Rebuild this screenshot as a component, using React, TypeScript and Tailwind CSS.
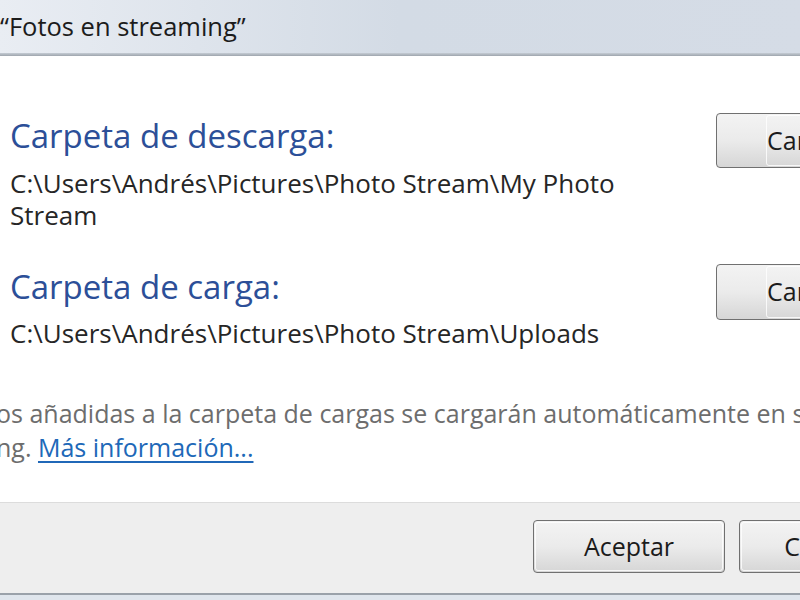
const FONT = "font-['Open_Sans','Noto_Sans',sans-serif]";

function WinButton({ label, className }: { label: string; className: string }) {
  return (
    <div
      className={`shrink-0 rounded-[4px] border border-[#707070] bg-gradient-to-b from-[#f3f3f3] via-[#ebebeb] to-[#d6d6d6] p-px ${className}`}
    >
      <div className="flex h-full items-center whitespace-nowrap rounded-[3px] border border-white/80 text-[25px] text-[#1b1b1b]">
        {label}
      </div>
    </div>
  );
}

export default function App() {
  return (
    <div className={`flex h-[600px] w-[800px] flex-col overflow-hidden bg-white ${FONT}`}>
      {/* title bar */}
      <div className="flex h-[53px] shrink-0 items-center bg-gradient-to-r from-[#e9edf3] via-[#d3dbe5] to-[#d5dce6] text-[25.5px] text-[#1c1c1c]">
        “Fotos en streaming”
      </div>
      <div className="h-[3px] shrink-0 bg-gradient-to-b from-[#c5ccd4] to-[#9ea5ad]" />

      {/* body */}
      <div className="flex h-[446px] shrink-0 flex-col overflow-hidden bg-white">
        <div className="flex w-[900px] pt-[57px]">
          <div className="w-[716px] shrink-0 pl-[10px]">
            <div className="text-[33px] leading-[46px] text-[#2c4f98]">Carpeta de descarga:</div>
            <div className="mt-[8px] w-[620px] text-[26px] leading-[32px] text-[#262626]">
              C:\Users\Andrés\Pictures\Photo Stream\My Photo Stream
            </div>
          </div>
          <WinButton label="Cambiar..." className="h-[55px] w-[200px] pl-[49px]" />
        </div>

        <div className="flex w-[900px] pt-[33px]">
          <div className="w-[716px] shrink-0 pl-[10px]">
            <div className="text-[33px] leading-[46px] text-[#2c4f98]">Carpeta de carga:</div>
            <div className="mt-[7px] whitespace-nowrap text-[26px] leading-[32px] text-[#262626]">
              C:\Users\Andrés\Pictures\Photo Stream\Uploads
            </div>
          </div>
          <WinButton label="Cambiar..." className="h-[56px] w-[200px] pl-[49px]" />
        </div>

        <div className="mt-[47px] -ml-[4px] whitespace-nowrap text-[25px] leading-[34px] text-[#6d6d6d]">
          <div>os añadidas a la carpeta de cargas se cargarán automáticamente en su</div>
          <div>
            ng.{' '}
            <span className="text-[#2068b8] underline underline-offset-[4px]">Más información...</span>
          </div>
        </div>
      </div>

      {/* footer */}
      <div className="flex h-[91px] w-[900px] shrink-0 items-start gap-[14px] border-t border-[#dcdcdc] bg-[#eeeeee] pl-[533px] pt-[17px]">
        <WinButton label="Aceptar" className="h-[53px] w-[192px] [&>div]:justify-center" />
        <WinButton label="Cancelar" className="h-[53px] w-[192px] [&>div]:justify-center" />
      </div>
      <div className="h-[2px] shrink-0 bg-[#9aa1a9]" />
      <div className="flex-1 bg-[#dfe5ec]" />
    </div>
  );
}
